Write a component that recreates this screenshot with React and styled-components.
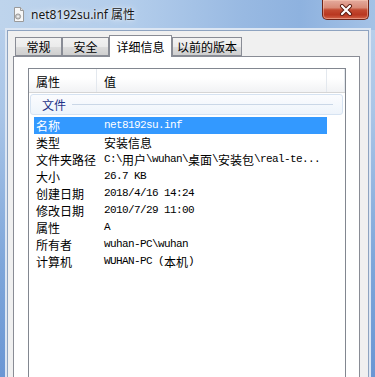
import React from "react";
import styled, { createGlobalStyle } from "styled-components";

const GlobalStyle = createGlobalStyle`
  html, body {
    margin: 0;
    padding: 0;
  }
  body {
    width: 375px;
    height: 377px;
    overflow: hidden;
    background: #7aa0d6;
  }
`;

const tabs = [
  { label: "常规", width: 47 },
  { label: "安全", width: 47 },
  { label: "详细信息", width: 63, active: true },
  { label: "以前的版本", width: 70 },
];

const rows = [
  { name: "名称", value: "net8192su.inf", selected: true },
  { name: "类型", value: "安装信息" },
  { name: "文件夹路径", value: "C:\\用户\\wuhan\\桌面\\安装包\\real-te..." },
  { name: "大小", value: "26.7 KB" },
  { name: "创建日期", value: "2018/4/16 14:24" },
  { name: "修改日期", value: "2010/7/29 11:00" },
  { name: "属性", value: "A" },
  { name: "所有者", value: "wuhan-PC\\wuhan" },
  { name: "计算机", value: "WUHAN-PC (本机)" },
];

function FileIcon() {
  return (
    <svg width="12" height="15" viewBox="0 0 12 15">
      <path d="M1.5 0.5H7.5L10.5 3.5V14.5H1.5Z" fill="#f7f7f7" stroke="#9a9a9a" />
      <path d="M7.5 0.5V3.5H10.5" fill="#e2e2e2" stroke="#9a9a9a" />
      <circle cx="5" cy="9.5" r="2.6" fill="#c9c9c9" stroke="#8c8c8c" strokeWidth="0.8" />
      <circle cx="5" cy="9.5" r="0.9" fill="#f7f7f7" />
    </svg>
  );
}

function CloseGlyph() {
  return (
    <svg width="14" height="12" viewBox="0 0 14 12">
      <path d="M3 2L11 10M11 2L3 10" stroke="#5b1b10" strokeWidth="4" strokeLinecap="round" />
      <path d="M3 2L11 10M11 2L3 10" stroke="#ffffff" strokeWidth="2.2" strokeLinecap="round" />
    </svg>
  );
}

function Value({ text }) {
  const runs = text.match(/[\x00-\x7f]+|[^\x00-\x7f]+/g) || [];
  return runs.map((run, i) =>
    /^[\x00-\x7f]/.test(run) ? (
      <Ascii key={i}>{run}</Ascii>
    ) : (
      <Wide key={i}>{run}</Wide>
    )
  );
}

export default function App() {
  return (
    <>
      <GlobalStyle />
      <Window>
        <TitleBar>
          <FileIcon />
          <Title>net8192su.inf 属性</Title>
          <CloseButton>
            <CloseGlyph />
          </CloseButton>
        </TitleBar>
        <Client>
          <TabStrip>
            {tabs.map((tab) => (
              <Tab key={tab.label} $width={tab.width} $active={tab.active}>
                {tab.label}
              </Tab>
            ))}
          </TabStrip>
          <Panel>
            <ListView>
              <Header>
                <HeaderCell $width={68}>属性</HeaderCell>
                <HeaderCell $width={230}>值</HeaderCell>
                <HeaderCell />
              </Header>
              <Group>
                <GroupLabel>文件</GroupLabel>
                <GroupLine />
              </Group>
              {rows.map((row) => (
                <Row key={row.name} $selected={row.selected}>
                  <Label>{row.name}</Label>
                  <Cell>
                    <Value text={row.value} />
                  </Cell>
                </Row>
              ))}
            </ListView>
          </Panel>
        </Client>
      </Window>
    </>
  );
}

const Window = styled.div`
  width: 375px;
  height: 377px;
  overflow: hidden;
  display: flex;
  flex-direction: column;
  padding: 0 6px 0 7px;
  box-sizing: border-box;
  background: linear-gradient(to bottom, #bcd2ec 0%, #a9c5e7 30%, #7ea6da 70%, #6a96d4 100%);
`;

const TitleBar = styled.div`
  height: 30px;
  flex-shrink: 0;
  display: flex;
  align-items: flex-start;
  padding-left: 3px;
  margin: 0 -6px 0 -7px;
  padding-right: 6px;
  background: linear-gradient(
    to right,
    #bed4ec 0%,
    #b3cdeb 35%,
    #98b9e2 65%,
    #8eb2df 80%,
    #a4c2e6 100%
  );

  & > svg:first-child {
    margin: 7px 0 0 10px;
  }
`;

const Title = styled.div`
  margin: 7px 0 0 6px;
  font-family: "Noto Sans", "Noto Sans CJK SC", sans-serif;
  font-size: 12px;
  line-height: 16px;
  color: #161616;
  text-shadow: 0 0 6px rgba(255, 255, 255, 0.9), 0 0 2px rgba(255, 255, 255, 0.8);
`;

const CloseButton = styled.div`
  margin-left: auto;
  width: 47px;
  height: 20px;
  box-sizing: border-box;
  display: flex;
  align-items: center;
  justify-content: center;
  border: 1px solid #6e2418;
  border-top: none;
  border-radius: 0 0 5px 5px;
  background: linear-gradient(
    to bottom,
    #e4ab9e 0%,
    #d98b78 40%,
    #c34a31 52%,
    #b93720 78%,
    #d4654a 100%
  );
  box-shadow: inset 0 0 0 1px rgba(255, 210, 190, 0.45);
`;

const Client = styled.div`
  flex: 1;
  display: flex;
  flex-direction: column;
  min-height: 400px;
  background: #f0f0f0;
  border: 1px solid #8ea3c0;
  box-shadow: 0 0 0 2px #dce6f3;
`;

const TabStrip = styled.div`
  display: flex;
  align-items: flex-end;
  height: 21px;
  margin-top: 4px;
  padding-left: 7px;
`;

const Tab = styled.div`
  position: relative;
  width: ${(p) => p.$width}px;
  height: ${(p) => (p.$active ? 22 : 19)}px;
  margin-bottom: ${(p) => (p.$active ? -1 : 0)}px;
  z-index: ${(p) => (p.$active ? 1 : 0)};
  box-sizing: border-box;
  border: 1px solid #898c95;
  border-bottom: ${(p) => (p.$active ? "none" : "1px solid #898c95")};
  background: ${(p) =>
    p.$active
      ? "#ffffff"
      : "linear-gradient(to bottom, #f2f2f2 0%, #ebebeb 50%, #dddddd 51%, #cfcfcf 100%)"};
  display: flex;
  align-items: center;
  justify-content: center;
  font-family: "Noto Sans CJK SC", sans-serif;
  font-size: 12px;
  color: #000;
`;

const Panel = styled.div`
  flex: 1;
  margin: 0 8px 0 5px;
  background: #ffffff;
  border: 1px solid #898c95;
  padding: 11px 13px 0 14px;
  display: flex;
  flex-direction: column;
`;

const ListView = styled.div`
  flex: 1;
  background: #ffffff;
  border: 1px solid #828790;
  font-family: "Noto Sans CJK SC", sans-serif;
  font-size: 12px;
  color: #000;
`;

const Header = styled.div`
  display: flex;
  height: 23px;
  border-bottom: 1px solid #d5d5d5;
  background: linear-gradient(to bottom, #ffffff 0%, #ffffff 40%, #f1f2f4 100%);
`;

const HeaderCell = styled.div`
  ${(p) => (p.$width ? `width: ${p.$width}px;` : "flex: 1;")}
  box-sizing: border-box;
  padding: 3px 0 0 7px;
  border-right: 1px solid #e3e8ee;
  line-height: 20px;
`;

const Group = styled.div`
  display: flex;
  align-items: center;
  gap: 6px;
  height: 21px;
  box-sizing: border-box;
  margin: 1px 2px 2px 1px;
  padding: 0 9px 0 11px;
  border: 1px solid #d6e3f2;
  border-radius: 3px;
  background: linear-gradient(to bottom, #fbfcfe 0%, #eef4fb 100%);
`;

const GroupLabel = styled.span`
  color: #1e3287;
  line-height: 19px;
`;

const GroupLine = styled.div`
  flex: 1;
  height: 1px;
  background: #cad7e7;
`;

const Row = styled.div`
  display: grid;
  grid-template-columns: 68px 1fr;
  width: 293px;
  height: 17px;
  margin-left: 5px;
  padding-left: 2px;
  box-sizing: border-box;
  align-items: center;
  line-height: 17px;
  background: ${(p) => (p.$selected ? "#3399ff" : "transparent")};
  color: ${(p) => (p.$selected ? "#ffffff" : "#000000")};
`;

const Label = styled.span`
  white-space: nowrap;
`;

const Cell = styled.span`
  white-space: nowrap;
  display: flex;
  align-items: center;
`;

const Ascii = styled.span`
  font-family: "Liberation Mono", monospace;
  font-size: 11px;
  letter-spacing: -0.6px;
  white-space: pre;
`;

const Wide = styled.span`
  font-family: "Noto Sans CJK SC", sans-serif;
  font-size: 12px;
`;
